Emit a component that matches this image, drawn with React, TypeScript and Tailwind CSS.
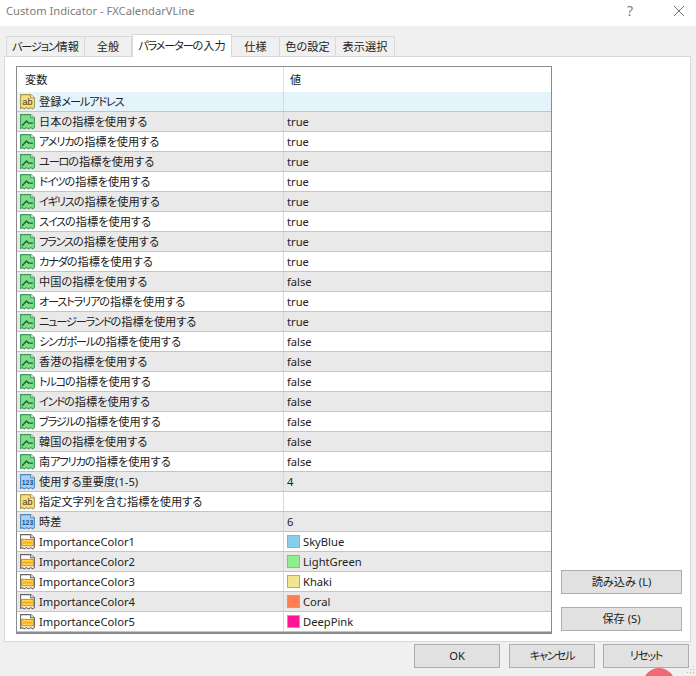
import { Fragment } from "react";

const font = "[font-family:'Noto_Sans','Noto_Sans_CJK_JP',sans-serif] [font-feature-settings:'palt']";

type Kind = "text" | "bool" | "num" | "color";
type Row = { name: string; value: string; kind: Kind; swatch?: string };

const countries = [
  ["日本", "true"],
  ["アメリカ", "true"],
  ["ユーロ", "true"],
  ["ドイツ", "true"],
  ["イギリス", "true"],
  ["スイス", "true"],
  ["フランス", "true"],
  ["カナダ", "true"],
  ["中国", "false"],
  ["オーストラリア", "true"],
  ["ニュージーランド", "true"],
  ["シンガポール", "false"],
  ["香港", "false"],
  ["トルコ", "false"],
  ["インド", "false"],
  ["ブラジル", "false"],
  ["韓国", "false"],
  ["南アフリカ", "false"],
];

const rows: Row[] = [
  { name: "登録メールアドレス", value: "", kind: "text" },
  ...countries.map(([c, v]): Row => ({ name: `${c}の指標を使用する`, value: v, kind: "bool" })),
  { name: "使用する重要度(1-5)", value: "4", kind: "num" },
  { name: "指定文字列を含む指標を使用する", value: "", kind: "text" },
  { name: "時差", value: "6", kind: "num" },
  { name: "ImportanceColor1", value: "SkyBlue", kind: "color", swatch: "#87ceeb" },
  { name: "ImportanceColor2", value: "LightGreen", kind: "color", swatch: "#90ee90" },
  { name: "ImportanceColor3", value: "Khaki", kind: "color", swatch: "#f0e68c" },
  { name: "ImportanceColor4", value: "Coral", kind: "color", swatch: "#ff7f50" },
  { name: "ImportanceColor5", value: "DeepPink", kind: "color", swatch: "#ff1493" },
];

const tabs = [
  { label: "バージョン情報", w: "w-[79px]" },
  { label: "全般", w: "w-[47px]" },
  { label: "パラメーターの入力", w: "w-[100px]", active: true },
  { label: "仕様", w: "w-[48px]" },
  { label: "色の設定", w: "w-[56px]" },
  { label: "表示選択", w: "w-[59px]" },
];

// katakana sits tighter in the original UI font
function Label({ text }: { text: string }) {
  return (
    <>
      {text.split(/([ァ-ヶー]+)/).map((part, i) =>
        i % 2 === 1 ? (
          <span key={i} className="tracking-[-1.2px]">
            {part}
          </span>
        ) : (
          <Fragment key={i}>{part}</Fragment>
        ),
      )}
    </>
  );
}

const docPath = "M1.5 1.5H11L14.5 4.5V13.5L13 15L11 13.8L9 15L7 13.8L5 15L3 13.8L1.5 14.5Z";

function ParamIcon({ kind }: { kind: Kind }) {
  if (kind === "bool") {
    return (
      <svg width="17" height="17" viewBox="0 0 16 16" className="shrink-0">
        <path d={docPath} fill="#7fdc8a" stroke="#3f9a5c" />
        <path d="M11 1.5V4.5H14.5" fill="#e8f8e8" stroke="#3f9a5c" />
        <path d="M3 12L7 7.5L9 9.5H13" fill="none" stroke="#14602f" strokeWidth="1.3" />
      </svg>
    );
  }
  if (kind === "color") {
    return (
      <svg width="17" height="17" viewBox="0 0 16 16" className="shrink-0">
        <path d={docPath} fill="#ffffff" stroke="#666666" />
        <path d="M11 1.5V4.5H14.5" fill="#f0f0f0" stroke="#666666" />
        <rect x="2.5" y="6" width="11" height="6" fill="#ffd84a" stroke="#e8801c" />
        <rect x="3.5" y="8" width="9" height="2" fill="#ffa820" />
      </svg>
    );
  }
  const num = kind === "num";
  return (
    <svg width="17" height="17" viewBox="0 0 16 16" className="shrink-0">
      <path d={docPath} fill={num ? "#a9d0f2" : "#f6de80"} stroke={num ? "#4f88c0" : "#a89848"} />
      <path d="M11 1.5V4.5H14.5" fill="#ffffff" stroke={num ? "#4f88c0" : "#a89848"} />
      <text
        x="8"
        y="11"
        textAnchor="middle"
        fontSize={num ? 6.5 : 8.5}
        fontWeight={num ? 700 : 400}
        fontFamily="Liberation Sans, sans-serif"
        fill={num ? "#14518f" : "#4a4020"}
      >
        {num ? "123" : "ab"}
      </text>
    </svg>
  );
}

function ParamRow({ row, index }: { row: Row; index: number }) {
  const bg = index === 0 ? "bg-[#e5f3fb]" : index % 2 === 1 ? "bg-[#e9e9e9]" : "bg-white";
  return (
    <div className={`flex h-[20px] border-b border-[#c4c4c4] ${bg}`}>
      <div className="flex w-[267px] shrink-0 items-center gap-[3px] border-r border-[#d8d8d8] pl-[2px]">
        <ParamIcon kind={row.kind} />
        <span className="whitespace-nowrap text-[#222]">
          <Label text={row.name} />
        </span>
      </div>
      <div className="flex items-center gap-[3px] pl-[3px] text-[#222]">
        {row.swatch && (
          <span className="h-[13px] w-[13px] border border-[#a8a8a8]" style={{ backgroundColor: row.swatch }} />
        )}
        <span>{row.value}</span>
      </div>
    </div>
  );
}

function DlgButton({ label, className }: { label: string; className: string }) {
  return (
    <button className={`flex h-[24px] items-center justify-center border border-[#adadad] bg-[#e1e1e1] text-[#222] ${className}`}>
      <span>
        <Label text={label} />
      </span>
    </button>
  );
}

export default function App() {
  return (
    <div className={`relative flex h-[676px] w-[696px] flex-col overflow-hidden bg-[#f0f0f0] text-[11.2px] leading-[16px] ${font}`}>
      <div className="flex h-[26px] shrink-0 items-center justify-between bg-white pb-[5px] pl-[6px] pr-[11px] text-[#7c7c7c]">
        <span>Custom Indicator - FXCalendarVLine</span>
        <div className="flex items-center gap-[40px]">
          <span className="text-[14px] text-[#808080]">?</span>
          <svg width="12" height="12" viewBox="0 0 12 12">
            <path d="M1 1L11 11M11 1L1 11" stroke="#707070" strokeWidth="1" />
          </svg>
        </div>
      </div>

      <div className="flex h-[30px] shrink-0 items-end pl-[6px]">
        {tabs.map((t) =>
          t.active ? (
            <div
              key={t.label}
              className={`relative z-10 -mb-px flex h-[23px] items-center justify-center whitespace-nowrap border border-b-0 border-[#d9d9d9] bg-white text-[#222] ${t.w}`}
            >
              <span>
                <Label text={t.label} />
              </span>
            </div>
          ) : (
            <div
              key={t.label}
              className={`flex h-[20px] items-center justify-center whitespace-nowrap border border-b-0 border-l-0 border-[#d9d9d9] bg-[#f0f0f0] text-[#222] first:border-l ${t.w}`}
            >
              <span>
                <Label text={t.label} />
              </span>
            </div>
          ),
        )}
      </div>

      <div className="ml-[4px] flex h-[586px] w-[687px] border border-[#d9d9d9] bg-white pl-[11px] pt-[9px]">
        <div className="h-[568px] w-[536px] shrink-0 border border-b-2 border-[#8c8c8c] bg-white">
          <div className="flex h-[25px] text-[#222]">
            <div className="flex w-[267px] shrink-0 items-center border-r border-[#e0e0e0] pl-[8px]">変数</div>
            <div className="flex items-center pl-[6px]">値</div>
          </div>
          {rows.map((r, i) => (
            <ParamRow key={r.name} row={r} index={i} />
          ))}
        </div>
        <div className="ml-[9px] flex h-[565px] flex-col justify-end gap-[13px]">
          <DlgButton label="読み込み (L)" className="w-[121px]" />
          <DlgButton label="保存 (S)" className="w-[121px]" />
        </div>
      </div>

      <div className="mt-[2px] flex justify-end gap-[8px] pr-[7px]">
        <DlgButton label="OK" className="mr-[1px] w-[86px]" />
        <DlgButton label="キャンセル" className="w-[86px]" />
        <DlgButton label="リセット" className="w-[86px]" />
      </div>

      <div className="absolute left-[643px] top-[668px] h-[32px] w-[32px] rounded-full bg-[#ee6b73]" />
      <svg width="10" height="10" viewBox="0 0 10 10" className="absolute bottom-[1px] right-[1px]">
        <path d="M8 1h1v1H8zM5 4h1v1H5zM8 4h1v1H8zM2 7h1v1H2zM5 7h1v1H5zM8 7h1v1H8z" fill="#b8b8b8" />
      </svg>
    </div>
  );
}
